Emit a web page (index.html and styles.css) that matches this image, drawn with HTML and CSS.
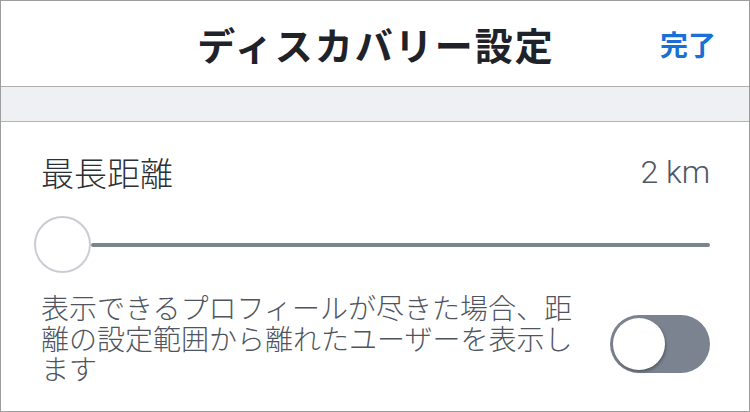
FILE: index.html
```html
<!DOCTYPE html>
<html lang="ja">
<head>
<meta charset="utf-8">
<link rel="stylesheet" href="styles.css">
</head>
<body>
<div class="screen">
  <header class="nav">
    <div class="nav-title">ディスカバリー設定</div>
    <div class="nav-done">完了</div>
  </header>
  <div class="band"></div>
  <section class="content">
    <div class="row">
      <span class="label">最長距離</span>
      <span class="value">2 km</span>
    </div>
    <div class="slider">
      <div class="knob"></div>
      <div class="track"></div>
    </div>
    <div class="toggle-row">
      <p class="desc">表示できるプロフィールが尽きた場合、距離の設定範囲から離れたユーザーを表示します</p>
      <div class="switch"><div class="switch-knob"></div></div>
    </div>
  </section>
</div>
</body>
</html>
```
FILE: styles.css
```css
* { box-sizing: border-box; }
html, body { margin: 0; padding: 0; background: #fff; }
body { font-family: "Noto Sans CJK JP", "Noto Sans", sans-serif; }
.screen {
  width: 750px;
  height: 412px;
  border: 1px solid #9d9d9d;
  overflow: hidden;
  display: flex;
  flex-direction: column;
}
.nav {
  height: 86px;
  flex: none;
  border-bottom: 1px solid #adadad;
  display: flex;
  align-items: center;
  justify-content: center;
  position: relative;
}
.nav-title {
  font-size: 38px;
  font-weight: 700;
  color: #1f2329;
  line-height: 1;
  letter-spacing: 2px;
  margin-left: 2px;
}
.nav-done {
  position: absolute;
  right: 33px;
  top: 26px;
  font-size: 28px;
  font-weight: 700;
  color: #1a6fd6;
  line-height: 34px;
}
.band {
  height: 35px;
  flex: none;
  background: #eff0f4;
  border-bottom: 1px solid #b3b3b3;
}
.content {
  padding: 0 39px 0 40px;
}
.row {
  display: flex;
  justify-content: space-between;
  align-items: center;
  height: 40px;
  margin-top: 30px;
}
.label {
  font-size: 33px;
  font-weight: 300;
  color: #2b2f36;
  line-height: 40px;
}
.value {
  font-family: Roboto, "Noto Sans", sans-serif;
  font-size: 32px;
  font-weight: 300;
  color: #4f5764;
  line-height: 40px;
}
.slider {
  display: flex;
  align-items: center;
  height: 57px;
  margin-top: 24px;
  margin-left: -7px;
}
.knob {
  width: 57px;
  height: 57px;
  border-radius: 50%;
  border: 2px solid #c9cdd3;
  background: #fff;
  flex: none;
}
.track {
  flex: 1;
  height: 4px;
  border-radius: 2px;
  background: #7c8490;
}
.toggle-row {
  display: flex;
  align-items: center;
  justify-content: space-between;
  margin-top: 19px;
}
.desc {
  margin: 0;
  width: 540px;
  font-size: 28px;
  font-weight: 300;
  line-height: 30.5px;
  color: #4e5560;
}
.switch {
  width: 100px;
  height: 58px;
  border-radius: 29px;
  background: #7b8390;
  padding: 3px;
  flex: none;
  margin-top: 12px;
}
.switch-knob {
  width: 52px;
  height: 52px;
  border-radius: 50%;
  background: #fff;
  box-shadow: 1px 2px 3px rgba(0,0,0,0.3);
}
```
